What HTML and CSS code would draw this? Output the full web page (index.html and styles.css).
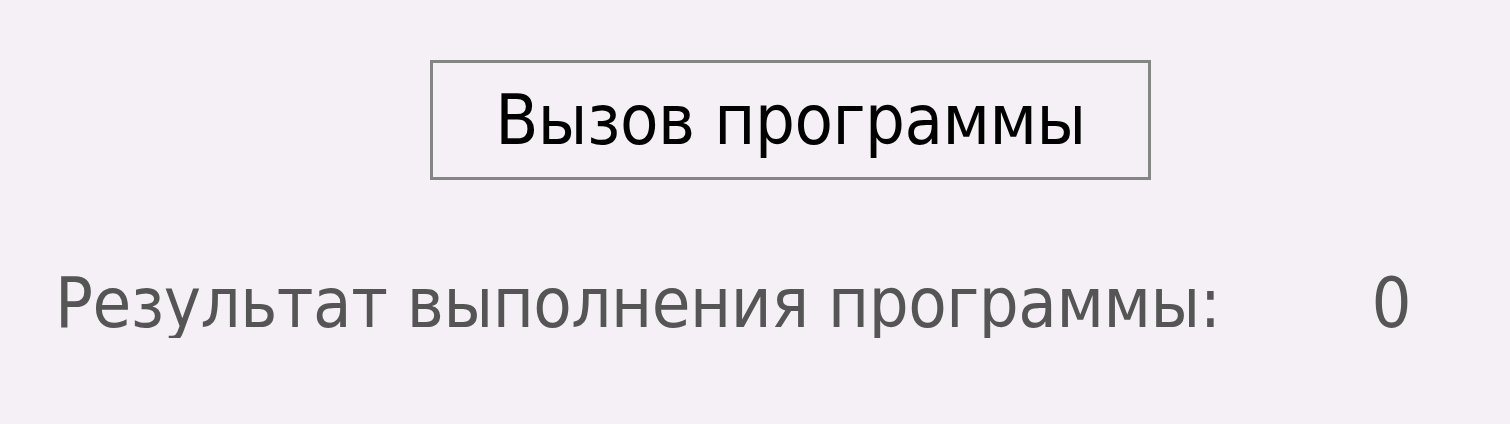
FILE: index.html
```html
<!DOCTYPE html>
<html lang="ru">
<head>
<meta charset="utf-8">
<link rel="stylesheet" href="styles.css">
</head>
<body>
<div class="page">
  <div class="top">
    <button class="call-btn">Вызов программы</button>
  </div>
  <div class="result">
    <span class="label">Результат выполнения программы:</span>
    <span class="value">0</span>
  </div>
</div>
</body>
</html>
```

FILE: styles.css
```css
html, body {
  margin: 0;
  padding: 0;
  background: #f4f0f5;
}
.page {
  font-family: "DejaVu Sans Condensed", "DejaVu Sans", sans-serif;
  font-stretch: condensed;
  padding: 60px 0 0 55px;
}
.top {
  padding-left: 375px;
}
.call-btn {
  font-family: inherit;
  font-stretch: condensed;
  font-size: 70px;
  letter-spacing: -0.5px;
  color: #000;
  background: transparent;
  border: 3px solid #858585;
  width: 721px;
  height: 120px;
  padding: 0;
  margin: 0;
  line-height: 1;
}
.result {
  display: flex;
  align-items: baseline;
  margin-top: 88px;
  font-size: 70px;
  letter-spacing: -0.5px;
  color: #555555;
  line-height: 1;
}
.value {
  margin-left: 151px;
}
```
